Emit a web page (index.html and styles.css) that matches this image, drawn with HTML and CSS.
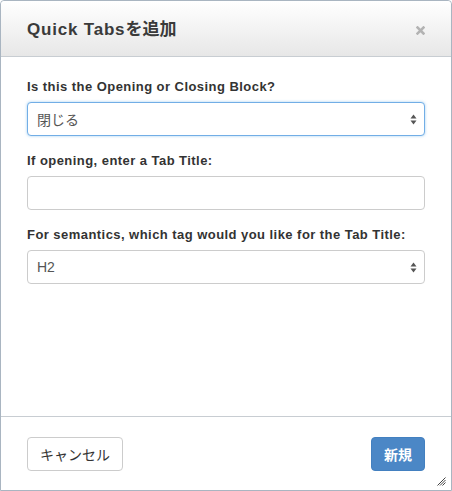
FILE: index.html
```html
<!DOCTYPE html>
<html lang="ja">
<head>
<meta charset="utf-8">
<title>Quick Tabsを追加</title>
<link rel="stylesheet" href="styles.css">
</head>
<body>
<div class="dialog">
  <div class="header">
    <h1 class="title"><span class="latin">Quick Tabs</span>を追加</h1>
    <button class="close" aria-label="close">
      <svg width="9" height="9" viewBox="0 0 9 9"><path d="M1.5 1.5 L7.5 7.5 M7.5 1.5 L1.5 7.5" stroke="#b3b3b3" stroke-width="2.5" stroke-linecap="square"/></svg>
    </button>
  </div>
  <div class="body">
    <div class="group">
      <label class="label">Is this the Opening or Closing Block?</label>
      <div class="select focus"><span>閉じる</span><svg class="arrows" width="7" height="11" viewBox="0 0 7 11"><path d="M3.5 0.5 L6.5 4.5 H0.5 Z M3.5 10.5 L6.5 6.5 H0.5 Z" fill="#555"/></svg></div>
    </div>
    <div class="group">
      <label class="label">If opening, enter a Tab Title:</label>
      <div class="input"></div>
    </div>
    <div class="group">
      <label class="label">For semantics, which tag would you like for the Tab Title:</label>
      <div class="select"><span>H2</span><svg class="arrows" width="7" height="11" viewBox="0 0 7 11"><path d="M3.5 0.5 L6.5 4.5 H0.5 Z M3.5 10.5 L6.5 6.5 H0.5 Z" fill="#555"/></svg></div>
    </div>
  </div>
  <div class="footer">
    <button class="btn btn-default">キャンセル</button>
    <button class="btn btn-primary">新規</button>
  </div>
  <svg class="grip" width="9" height="9" viewBox="0 0 9 9"><path d="M8.5 0.5 L0.5 8.5 M8.5 3 L3 8.5 M8.5 5.5 L5.5 8.5" stroke="#444" stroke-width="1"/></svg>
</div>
</body>
</html>
```
FILE: styles.css
```css
html, body {
  margin: 0;
  padding: 0;
  background: #ffffff;
}
body {
  font-family: "Liberation Sans", Arial, "Noto Sans CJK JP", sans-serif;
  color: #333;
}
.dialog {
  position: relative;
  box-sizing: border-box;
  width: 452px;
  height: 491px;
  border: 1px solid #a9b5c1;
  border-radius: 4px 4px 0 0;
  display: flex;
  flex-direction: column;
  background: #fff;
}
.header {
  box-sizing: border-box;
  height: 56px;
  flex: none;
  display: flex;
  align-items: center;
  justify-content: space-between;
  padding: 0 26px 0 26px;
  background: linear-gradient(#ffffff, #e7e7e7);
  border-bottom: 1px solid #c8cdd2;
  border-radius: 4px 4px 0 0;
}
.title {
  margin: 0;
  font-size: 17px;
  font-weight: bold;
  color: #3a3a3a;
  font-family: "Liberation Sans", Arial, "Noto Sans CJK JP", sans-serif;
  line-height: 20px;
  padding-top: 2px;
}
.title .latin {
  letter-spacing: 0.8px;
}
.close {
  border: 0;
  background: none;
  padding: 0;
  display: flex;
  margin-right: 0;
  margin-top: 4px;
}
.body {
  flex: 1;
  padding: 20px 26px 0 26px;
}
.group {
  display: flex;
  flex-direction: column;
  margin-bottom: 15px;
}
.label {
  font-size: 13px;
  font-weight: bold;
  letter-spacing: 0.45px;
  line-height: 20px;
  margin-bottom: 5px;
  color: #333;
}
.select, .input {
  box-sizing: border-box;
  height: 34px;
  border: 1px solid #cccccc;
  border-radius: 4px;
  background: #fff;
  display: flex;
  align-items: center;
  justify-content: space-between;
  padding: 0 7px 0 9px;
  font-size: 14px;
  color: #555;
  font-family: "Liberation Sans", Arial, "Noto Sans CJK JP", sans-serif;
}
.select.focus {
  border-color: #72aee6;
  box-shadow: 0 0 3px rgba(102, 175, 233, 0.6);
}
.arrows {
  display: block;
}
.footer {
  box-sizing: border-box;
  flex: none;
  height: 74px;
  border-top: 1px solid #c8cdd2;
  padding: 20px 26px 0 26px;
  display: flex;
  justify-content: space-between;
  align-items: flex-start;
}
.btn {
  box-sizing: border-box;
  height: 34px;
  border-radius: 4px;
  font-size: 14px;
  padding: 0 12px;
  font-family: "Noto Sans CJK JP", sans-serif;
  line-height: 32px;
}
.btn-default {
  background: #fff;
  border: 1px solid #cccccc;
  color: #333;
}
.btn-primary {
  background: #4b87c6;
  border: 1px solid #4380c0;
  color: #fff;
  font-weight: bold;
}
.grip {
  position: absolute;
  right: 5px;
  bottom: 4px;
}
```
